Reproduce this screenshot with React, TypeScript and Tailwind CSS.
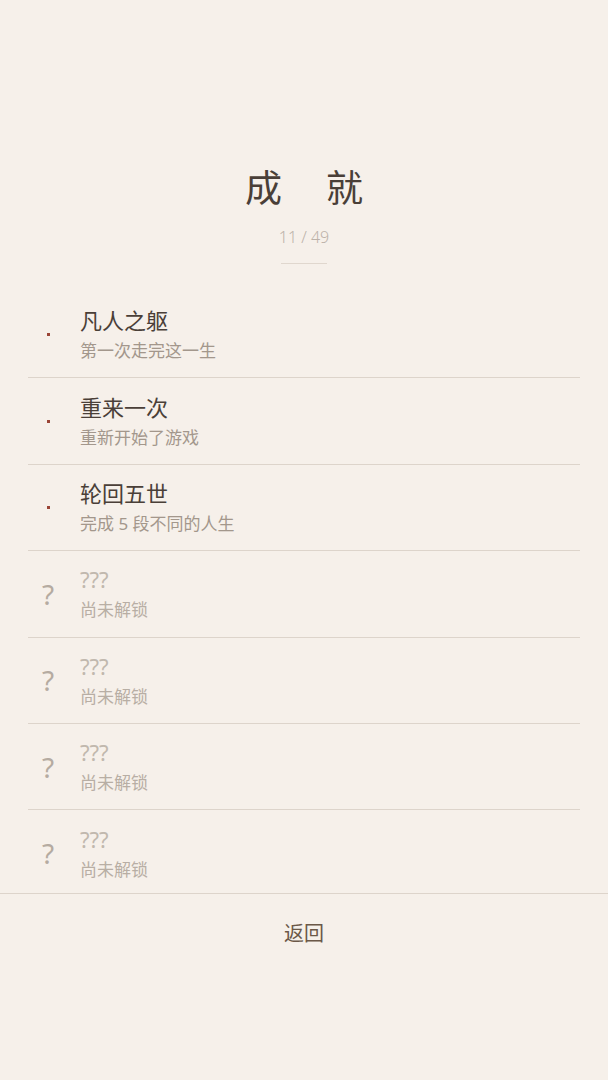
import React from "react";

type Item = { title: string; desc: string; unlocked: boolean };

const items: Item[] = [
  { title: "凡人之躯", desc: "第一次走完这一生", unlocked: true },
  { title: "重来一次", desc: "重新开始了游戏", unlocked: true },
  { title: "轮回五世", desc: "完成 5 段不同的人生", unlocked: true },
  { title: "???", desc: "尚未解锁", unlocked: false },
  { title: "???", desc: "尚未解锁", unlocked: false },
  { title: "???", desc: "尚未解锁", unlocked: false },
  { title: "???", desc: "尚未解锁", unlocked: false },
];

const font = { fontFamily: '"Noto Sans", "Noto Sans CJK SC", sans-serif' };

export default function App() {
  return (
    <div
      className="h-[1080px] w-full flex flex-col bg-[#f6f0ea] overflow-hidden"
      style={font}
    >
      <div className="flex flex-col items-center pt-[164px]">
        <div className="flex justify-center gap-[44px] text-[37px] leading-[48px] text-[#4a3f38]">
          <span>成</span>
          <span>就</span>
        </div>
        <div className="mt-[13px] text-[16px] leading-[24px] font-light text-[#bcb2a9]">11 / 49</div>
        <div className="mt-[14px] h-px w-[46px] bg-[#e0d7ce]" />
      </div>

      <div className="mt-[28px] mx-[28px] flex-1 overflow-hidden">
        {items.map((it, i) => (
          <div
            key={i}
            className="h-[86.4px] flex items-center border-b border-[#ddd4cb]"
          >
            <div className="w-[40px] flex justify-center">
              {it.unlocked ? (
                <div className="w-[3px] h-[3px] bg-[#9a4436]" />
              ) : (
                <span className="text-[28px] leading-none text-[#b5aba1]">?</span>
              )}
            </div>
            <div className="ml-[12px] flex flex-col">
              <div
                className={
                  "text-[22px] leading-[28px] " +
                  (it.unlocked ? "text-[#4a3f38]" : "text-[#c1b8ae]")
                }
              >
                {it.title}
              </div>
              <div
                className={
                  "mt-[5px] text-[17px] leading-[24px] " +
                  (it.unlocked ? "text-[#a3978c]" : "text-[#b8aea4]")
                }
              >
                {it.desc}
              </div>
            </div>
          </div>
        ))}
      </div>

      <div className="h-[187px] border-t border-[#ddd4cb] flex justify-center pt-[26px]">
        <div className="text-[20px] leading-[28px] text-[#6b5848]">返回</div>
      </div>
    </div>
  );
}
